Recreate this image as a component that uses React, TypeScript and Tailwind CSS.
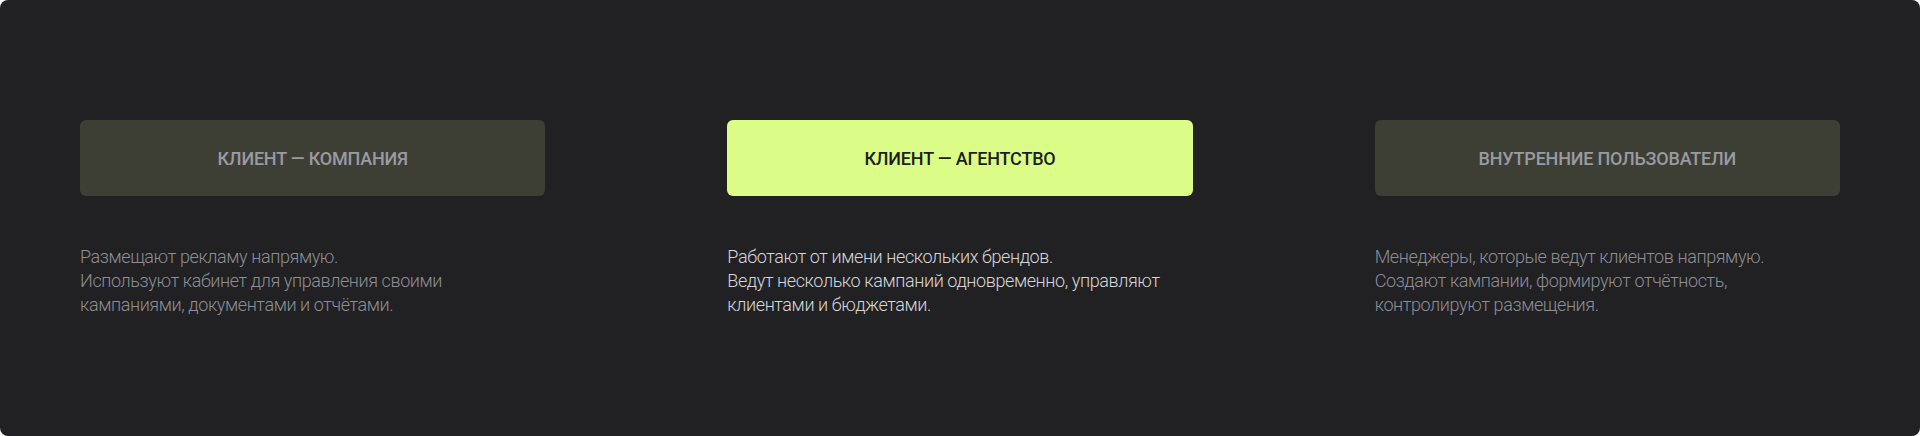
import React from 'react';

const roles = [
  {
    title: 'КЛИЕНТ — КОМПАНИЯ',
    lines: [
      'Размещают рекламу напрямую.',
      'Используют кабинет для управления своими',
      'кампаниями, документами и отчётами.',
    ],
    active: false,
  },
  {
    title: 'КЛИЕНТ — АГЕНТСТВО',
    lines: [
      'Работают от имени нескольких брендов.',
      'Ведут несколько кампаний одновременно, управляют',
      'клиентами и бюджетами.',
    ],
    active: true,
  },
  {
    title: 'ВНУТРЕННИЕ ПОЛЬЗОВАТЕЛИ',
    lines: [
      'Менеджеры, которые ведут клиентов напрямую.',
      'Создают кампании, формируют отчётность,',
      'контролируют размещения.',
    ],
    active: false,
  },
];

export default function App() {
  return (
    <div className="bg-white h-[436px] w-[1920px]">
      <div
        className="h-full rounded-lg bg-[#212123] px-20 pt-[120px]"
        style={{ fontFamily: 'Roboto, "Noto Sans", sans-serif' }}
      >
        <div className="grid grid-cols-3 gap-x-[182px]">
          {roles.map((role) => (
            <div key={role.title}>
              <button
                className={
                  role.active
                    ? 'flex h-[76px] w-full items-center justify-center rounded-md bg-[#dbfd87] text-[18px] font-medium tracking-[-0.2px] text-[#1e1e1e]'
                    : 'flex h-[76px] w-full items-center justify-center rounded-md bg-[#3d3f35] text-[18px] font-medium tracking-[-0.2px] text-[#9a9aa3]'
                }
              >
                {role.title}
              </button>
              <p
                className={
                  role.active
                    ? 'mt-[49px] text-[18px] font-light leading-6 tracking-[-0.4px] text-[#d6d6dc]'
                    : 'mt-[49px] text-[18px] font-light leading-6 tracking-[-0.4px] text-[#8e8e96]'
                }
              >
                {role.lines.map((line) => (
                  <span key={line} className="block">
                    {line}
                  </span>
                ))}
              </p>
            </div>
          ))}
        </div>
      </div>
    </div>
  );
}
